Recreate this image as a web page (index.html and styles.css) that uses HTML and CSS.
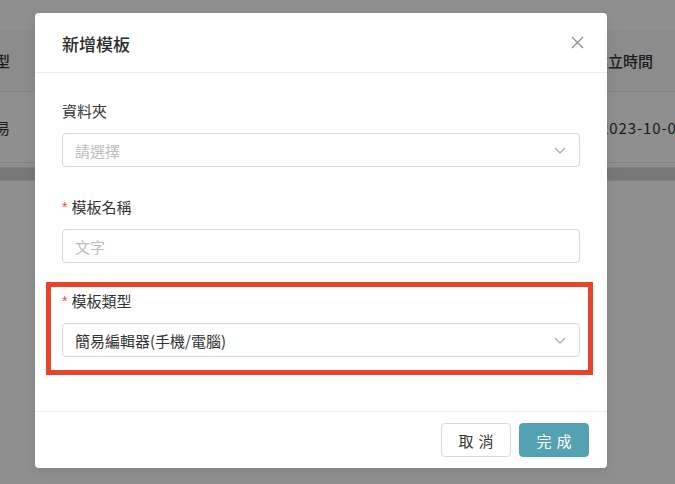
FILE: index.html
```html
<!DOCTYPE html>
<html lang="zh-Hant">
<head>
<meta charset="utf-8">
<title>新增模板</title>
<link rel="stylesheet" href="styles.css">
</head>
<body>
<div class="page">
  <div class="table">
    <div class="row head">
      <div class="cell left"><span class="clip">類型</span></div>
      <div class="cell right head-right">建立時間</div>
    </div>
    <div class="row body-row">
      <div class="cell left"><span class="clip">簡易</span></div>
      <div class="cell right date">2023-10-02</div>
    </div>
    <div class="scrollbar"></div>
  </div>

  <div class="mask"></div>

  <div class="modal">
    <div class="modal-header">
      <div class="modal-title">新增模板</div>
      <svg class="close" width="13" height="13" viewBox="0 0 13 13"><path d="M1 1L12 12M12 1L1 12" stroke="#8c8c8c" stroke-width="1.2" fill="none"/></svg>
    </div>
    <div class="modal-body">
      <div class="item">
        <div class="label">資料夾</div>
        <div class="control select">
          <span class="placeholder">請選擇</span>
          <svg class="arrow" width="12" height="7" viewBox="0 0 12 7"><path d="M1 1L6 6L11 1" stroke="#a6a6a6" stroke-width="1.1" fill="none"/></svg>
        </div>
      </div>
      <div class="item">
        <div class="label"><span class="req">*</span>模板名稱</div>
        <div class="control">
          <span class="placeholder">文字</span>
        </div>
      </div>
      <div class="highlight">
        <div class="item last">
          <div class="label"><span class="req">*</span>模板類型</div>
          <div class="control select">
            <span class="value">簡易編輯器(手機/電腦)</span>
            <svg class="arrow" width="12" height="7" viewBox="0 0 12 7"><path d="M1 1L6 6L11 1" stroke="#a6a6a6" stroke-width="1.1" fill="none"/></svg>
          </div>
        </div>
      </div>
    </div>
    <div class="modal-footer">
      <button class="btn">取消</button>
      <button class="btn primary">完成</button>
    </div>
  </div>
</div>
</body>
</html>
```

FILE: styles.css
```css
* { box-sizing: border-box; }
html, body {
  margin: 0;
  padding: 0;
  width: 675px;
  height: 484px;
  overflow: hidden;
  font-family: "Noto Sans CJK TC", "Noto Sans", sans-serif;
}
.page {
  position: relative;
  width: 675px;
  height: 484px;
  background: #ffffff;
  overflow: hidden;
}
.table {
  padding-top: 30px;
}
.row {
  display: flex;
  white-space: nowrap;
  color: #333333;
  font-size: 15px;
}
.head {
  height: 62px;
  align-items: center;
  background: #fafafa;
  border-bottom: 1px solid #ececec;
  font-weight: 500;
}
.body-row {
  height: 71px;
  align-items: center;
  border-bottom: 1px solid #ececec;
}
.cell {
  flex-shrink: 0;
}
.cell.left {
  width: 594px;
}
.clip {
  display: inline-block;
  margin-left: -20px;
}
.cell.right.head-right {
  margin-left: -1px;
}
.cell.right.date {
  margin-left: 6px;
  letter-spacing: 0.9px;
}
.scrollbar {
  height: 14px;
  margin-top: 4px;
  background: #d6d6d6;
  border-top: 1px solid #e2e2e2;
  border-bottom: 1px solid #e2e2e2;
}
.mask {
  position: absolute;
  inset: 0;
  background: rgba(0, 0, 0, 0.44);
}
.modal {
  position: absolute;
  left: 35px;
  top: 13px;
  width: 572px;
  height: 455px;
  background: #ffffff;
  border-radius: 4px;
  display: flex;
  flex-direction: column;
  box-shadow: 0 4px 14px rgba(0, 0, 0, 0.08);
}
.modal-header {
  height: 60px;
  padding: 0 23px 0 27px;
  display: flex;
  align-items: center;
  justify-content: space-between;
  border-bottom: 1px solid #ededed;
}
.modal-title {
  font-size: 17px;
  font-weight: 500;
  color: #2b2b2b;
  padding-top: 1px;
}
.close {
  display: block;
  margin-top: -1px;
}
.modal-body {
  flex: 1;
  padding: 27px 27px 0 27px;
}
.item {
  margin-bottom: 29px;
}
.item.last {
  margin-bottom: 0;
}
.label {
  height: 22px;
  line-height: 22px;
  font-size: 15px;
  color: #333333;
  margin-bottom: 11px;
  display: flex;
  align-items: center;
}
.req {
  color: #f04a3a;
  font-size: 14px;
  margin-right: 4px;
  font-family: "Liberation Sans", sans-serif;
}
.control {
  height: 34px;
  border: 1px solid #d9d9d9;
  border-radius: 4px;
  padding: 0 12px;
  display: flex;
  align-items: center;
  justify-content: space-between;
  font-size: 15px;
}
.placeholder {
  color: #bdbdbd;
}
.value {
  color: #333333;
}
.arrow {
  display: block;
  margin-right: 1px;
}
.highlight {
  margin: -10px -13px 0 -16px;
  border: 5px solid #e8432b;
  padding: 3px 8px 13px 11px;
}
.modal-footer {
  height: 57px;
  border-top: 1px solid #ededed;
  display: flex;
  justify-content: flex-end;
  align-items: flex-start;
  gap: 8px;
  padding: 11px 18px 0 0;
}
.btn {
  width: 70px;
  height: 34px;
  border: 1px solid #d9d9d9;
  border-radius: 4px;
  background: #ffffff;
  color: #333333;
  font-family: "Noto Sans CJK TC", sans-serif;
  font-size: 15px;
  letter-spacing: 5px;
  padding: 0 0 0 5px;
  cursor: pointer;
}
.btn.primary {
  background: #55a1b4;
  border-color: #55a1b4;
  color: #ffffff;
  box-shadow: 0 2px 0 rgba(0, 0, 0, 0.04);
}
```
